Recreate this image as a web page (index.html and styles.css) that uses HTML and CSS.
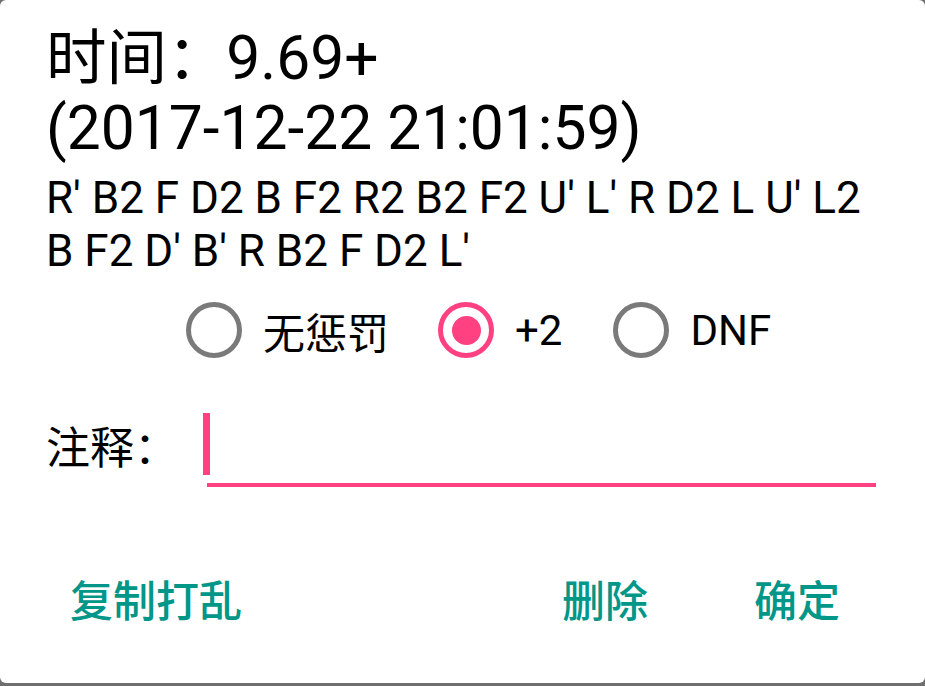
FILE: index.html
```html
<!DOCTYPE html>
<html lang="zh-CN">
<head>
<meta charset="utf-8">
<title>时间</title>
<link rel="stylesheet" href="styles.css">
</head>
<body>
<div class="dialog">
  <div class="title">时间<span class="colon">：</span>9.69+<br>(2017-12-22 21:01:59)</div>
  <div class="scramble">R' B2 F D2 B F2 R2 B2 F2 U' L' R D2 L U' L2 B F2 D' B' R B2 F D2 L'</div>
  <div class="penalty">
    <label class="radio r1"><span class="ring"></span><span class="radio-text">无惩罚</span></label>
    <label class="radio r2"><span class="ring checked"></span><span class="radio-text">+2</span></label>
    <label class="radio r3"><span class="ring"></span><span class="radio-text">DNF</span></label>
  </div>
  <div class="note">
    <span class="note-label">注释：</span>
    <div class="field"><span class="cursor"></span></div>
  </div>
  <div class="actions">
    <span class="btn">复制打乱</span>
    <span class="spacer"></span>
    <span class="btn">删除</span>
    <span class="btn last">确定</span>
  </div>
</div>
</body>
</html>
```
FILE: styles.css
```css
html, body {
  margin: 0;
  padding: 0;
}
body {
  width: 925px;
  height: 686px;
  overflow: hidden;
  background: #6f6f6f;
  font-family: Roboto, "Noto Sans CJK SC", sans-serif;
  color: #000;
}
.dialog {
  box-sizing: border-box;
  width: 925px;
  height: 683px;
  background: #fff;
  border-radius: 6px;
  padding: 24px 46px 0 46px;
}
.title {
  font-size: 60.5px;
  line-height: 70px;
}
.colon {
  font-family: "Noto Sans CJK SC", sans-serif;
  line-height: 0;
  font-feature-settings: "halt";
  margin-right: 29px;
}
.scramble {
  margin-top: 8px;
  font-size: 44px;
  line-height: 53px;
  padding-right: 2px;
}
.penalty {
  display: flex;
  align-items: center;
  margin-top: 24px;
  padding-left: 140px;
  height: 56px;
}
.radio {
  display: flex;
  align-items: center;
  font-size: 42px;
}
.r1 { margin-right: 49px; }
.r2 { margin-right: 51px; }
.ring {
  box-sizing: border-box;
  width: 56px;
  height: 56px;
  border: 5px solid #7a7a7a;
  border-radius: 50%;
  display: flex;
  align-items: center;
  justify-content: center;
  margin-right: 21px;
}
.ring.checked {
  border-color: #ff4081;
}
.ring.checked::after {
  content: "";
  width: 29px;
  height: 29px;
  border-radius: 50%;
  background: #ff4081;
}
.note {
  display: flex;
  align-items: center;
  margin-top: 47px;
  padding-right: 3px;
}
.note-label {
  font-size: 44px;
  line-height: 60px;
  width: 161px;
  margin-top: 6px;
}
.field {
  flex: 1;
  border-bottom: 4px solid #ff4081;
  padding: 8px 0;
  display: flex;
}
.cursor {
  width: 7px;
  height: 62px;
  background: #ff4081;
  margin-left: -4px;
}
.actions {
  display: flex;
  align-items: center;
  margin-top: 85px;
  height: 60px;
  padding: 0 39px 0 24px;
}
.btn {
  color: #009688;
  font-size: 43px;
  font-weight: 500;
  line-height: 60px;
}
.spacer {
  flex: 1;
}
.btn.last {
  margin-left: 106px;
}
```
